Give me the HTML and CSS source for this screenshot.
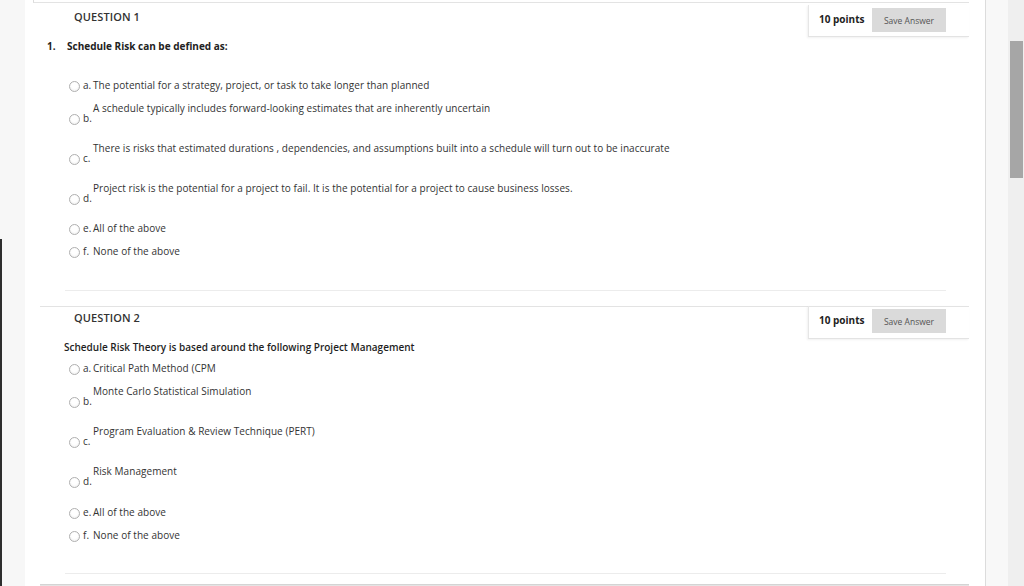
FILE: index.html
```html
<!DOCTYPE html>
<html lang="en">
<head>
<meta charset="utf-8">
<title>Quiz</title>
<link rel="stylesheet" href="styles.css">
</head>
<body>
<div class="page">
  <div class="left-strip"><div class="left-edge"></div></div>
  <div class="main">
    <div class="prev-box"></div>

    <div class="question first">
      <div class="q-head">
        <div class="q-title">QUESTION 1</div>
        <div class="points"><span class="pts">10 points</span><button class="save">Save Answer</button></div>
      </div>
      <div class="q-text numbered"><span class="q-num">1.</span><span>Schedule Risk can be defined as:</span></div>
      <div class="options first-opts">
        <div class="opt"><span class="radio"></span><span class="letter">a.</span><span class="txt">The potential for a strategy, project, or task to take longer than planned</span></div>
        <div class="opt tall"><span class="radio"></span><span class="letter">b.</span><span class="txt">A schedule typically includes forward-looking estimates that are inherently uncertain</span></div>
        <div class="opt tall"><span class="radio"></span><span class="letter">c.</span><span class="txt">There is risks that estimated durations , dependencies, and assumptions built into a schedule will turn out to be inaccurate</span></div>
        <div class="opt tall"><span class="radio"></span><span class="letter">d.</span><span class="txt">Project risk is the potential for a project to fail. It is the potential for a project to cause business losses.</span></div>
        <div class="opt"><span class="radio"></span><span class="letter">e.</span><span class="txt">All of the above</span></div>
        <div class="opt"><span class="radio"></span><span class="letter">f.</span><span class="txt">None of the above</span></div>
      </div>
      <div class="sep"></div>
    </div>

    <div class="question">
      <div class="q-head">
        <div class="q-title">QUESTION 2</div>
        <div class="points"><span class="pts">10 points</span><button class="save">Save Answer</button></div>
      </div>
      <div class="q-text plain">Schedule Risk Theory is based around the following Project Management</div>
      <div class="options second-opts">
        <div class="opt"><span class="radio"></span><span class="letter">a.</span><span class="txt">Critical Path Method (CPM</span></div>
        <div class="opt tall"><span class="radio"></span><span class="letter">b.</span><span class="txt">Monte Carlo Statistical Simulation</span></div>
        <div class="opt tall"><span class="radio"></span><span class="letter">c.</span><span class="txt">Program Evaluation &amp; Review Technique (PERT)</span></div>
        <div class="opt tall last-tall"><span class="radio"></span><span class="letter">d.</span><span class="txt">Risk Management</span></div>
        <div class="opt"><span class="radio"></span><span class="letter">e.</span><span class="txt">All of the above</span></div>
        <div class="opt"><span class="radio"></span><span class="letter">f.</span><span class="txt">None of the above</span></div>
      </div>
      <div class="sep second-sep"></div>
    </div>

    <div class="next-box"></div>
  </div>
  <div class="gutter"></div>
  <div class="scrollbar"><div class="thumb"></div></div>
</div>
</body>
</html>
```

FILE: styles.css
```css
* { box-sizing: border-box; }
html, body { margin: 0; padding: 0; background: #fff; }
body {
  font-family: "Open Sans", "Liberation Sans", sans-serif;
  color: #333;
  overflow: hidden;
}
.page {
  display: flex;
  width: 1024px;
  height: 586px;
  overflow: hidden;
}
.left-strip {
  width: 25px;
  flex: none;
  background: #f7f7f7;
}
.left-edge {
  margin-top: 239px;
  height: calc(100% - 239px);
  width: 2px;
  background: #2e2e2e;
}
.main {
  width: 960px;
  flex: none;
  background: #fff;
}
.prev-box {
  margin-left: 8px;
  width: 936px;
  height: 3px;
  border-left: 1px solid #dcdcdc;
  border-bottom: 1px solid #e3e3e3;
}
.question {
  margin-left: 15px;
  width: 929px;
  border-top: 1px solid #e3e3e3;
  margin-top: 15px;
}
.question.first {
  border-top-color: transparent;
  margin-top: 2px;
}
.q-head {
  display: flex;
  align-items: flex-start;
}
.q-title {
  padding: 4px 0 0 34px;
  font-size: 11px;
  line-height: 14px;
  font-weight: 600;
  color: #333;
  letter-spacing: 0.1px;
}
.points {
  margin-left: auto;
  margin-top: -1px;
  width: 161px;
  height: 33px;
  display: flex;
  align-items: flex-start;
  justify-content: space-between;
  padding: 3px 23px 0 10px;
  border-left: 1px solid #e6e6e6;
  border-bottom: 1px solid #e3e3e3;
  box-shadow: -1px 1px 2px rgba(0, 0, 0, 0.06);
}
.question.first .points {
  margin-top: -1px;
  height: 32px;
}
.pts {
  margin-top: 4px;
  font-size: 10px;
  line-height: 14px;
  font-weight: 700;
  color: #222;
}
.save {
  width: 74px;
  height: 24px;
  border: none;
  background: #dadada;
  color: #555;
  font-family: "Open Sans", "Liberation Sans", sans-serif;
  font-size: 8.5px;
  padding: 0;
}
.q-text {
  font-size: 10px;
  line-height: 14px;
  font-weight: 700;
  color: #222;
}
.q-text.numbered {
  display: flex;
  margin-top: 2px;
  padding-left: 7px;
}
.q-num { width: 20px; }
.q-text.plain {
  margin-top: 1px;
  padding-left: 24px;
  font-weight: 600;
  color: #1e1e1e;
}
.options {
  padding-left: 29px;
  margin-top: 7px;
}
.options.first-opts { margin-top: 25px; }
.opt {
  display: flex;
  align-items: flex-end;
  font-size: 10px;
  line-height: 14px;
  letter-spacing: 0.05px;
  color: #333;
  margin-bottom: 9px;
}
.opt.tall { margin-bottom: 16px; }
.opt.tall.last-tall { margin-bottom: 17px; }
.opt:last-child { margin-bottom: 0; }
.opt.tall .txt { padding-bottom: 10px; }
.radio {
  width: 11px;
  height: 11px;
  flex: none;
  border-radius: 50%;
  border: 1px solid #b0b0b0;
  background: radial-gradient(circle at 50% 40%, #ffffff 40%, #ebebeb 100%);
  margin-right: 3px;
}
.letter { width: 10px; flex: none; }
.sep {
  margin: 32px 23px 0 25px;
  height: 1px;
  background: #ececec;
}
.sep.second-sep { margin-top: 31px; }
.next-box {
  margin: 10px 0 0 15px;
  width: 929px;
  height: 6px;
  border-top: 1px solid #d4d4d4;
  background: #e4e4e4;
}
.gutter {
  width: 23px;
  flex: none;
  background: #f8f8f8;
  border-left: 1px solid #dcdcdc;
}
.scrollbar {
  width: 16px;
  flex: none;
  background: #efefef;
  padding: 41px 1px 0 2px;
}
.thumb {
  height: 137px;
  background: #a6a6a6;
}
```
